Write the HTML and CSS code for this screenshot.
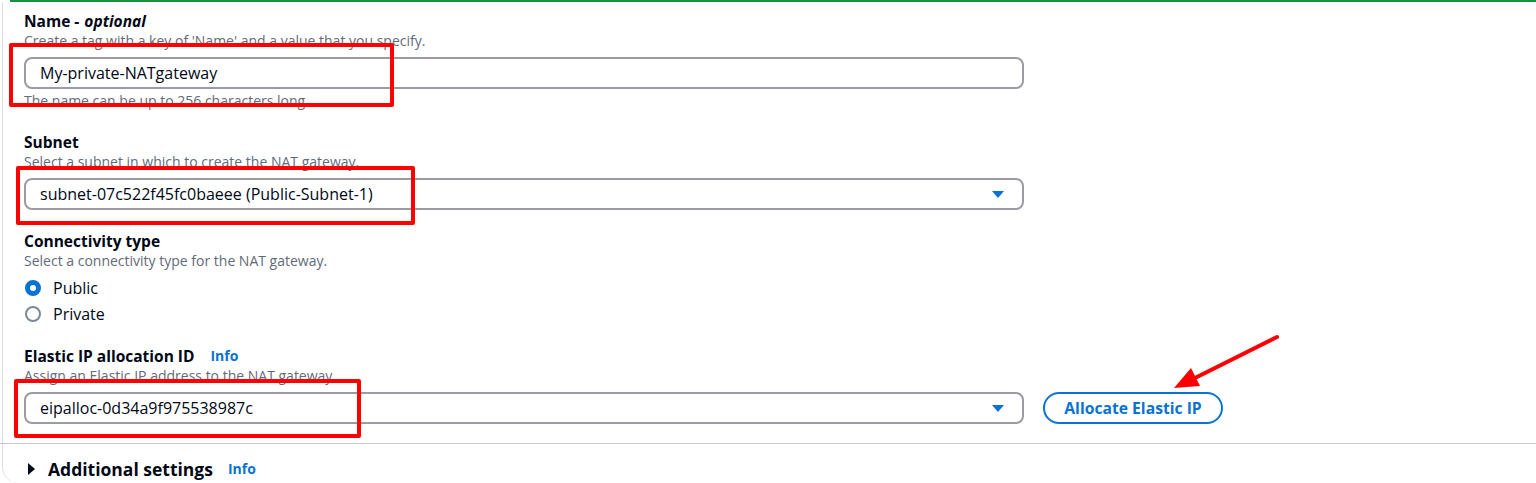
FILE: index.html
```html
<!DOCTYPE html>
<html lang="en">
<head>
<meta charset="utf-8">
<title>Create NAT gateway</title>
<link rel="stylesheet" href="styles.css">
</head>
<body>
<div class="page">
  <div class="topbar"></div>
  <div class="panel">
    <div class="fields">
      <div class="field">
        <div class="label">Name - <i>optional</i></div>
        <div class="desc">Create a tag with a key of 'Name' and a value that you specify.</div>
        <div class="control"><div class="input">My-private-NATgateway</div></div>
        <div class="hint">The name can be up to 256 characters long.</div>
      </div>
      <div class="field">
        <div class="label">Subnet</div>
        <div class="desc">Select a subnet in which to create the NAT gateway.</div>
        <div class="control">
          <div class="input select">
            <span>subnet-07c522f45fc0baeee (Public-Subnet-1)</span>
            <svg class="caret" viewBox="0 0 16 16" width="16" height="16"><path d="M2 5h12l-6 7z"/></svg>
          </div>
        </div>
      </div>
      <div class="field">
        <div class="label">Connectivity type</div>
        <div class="desc">Select a connectivity type for the NAT gateway.</div>
        <div class="radios">
          <div class="radio"><span class="dot checked"></span><span>Public</span></div>
          <div class="radio"><span class="dot"></span><span>Private</span></div>
        </div>
      </div>
      <div class="field tight">
        <div class="label">Elastic IP allocation ID <a class="info">Info</a></div>
        <div class="desc">Assign an Elastic IP address to the NAT gateway.</div>
        <div class="control row">
          <div class="input select">
            <span>eipalloc-0d34a9f975538987c</span>
            <svg class="caret" viewBox="0 0 16 16" width="16" height="16"><path d="M2 5h12l-6 7z"/></svg>
          </div>
          <button class="btn">Allocate Elastic IP</button>
        </div>
      </div>
    </div>
    <div class="expander">
      <svg class="tri" viewBox="0 0 16 16" width="16" height="16"><path d="M4 2v12l7-6z"/></svg>
      <span class="exp-title">Additional settings</span>
      <a class="info">Info</a>
    </div>
  </div>

  <div class="mark mark1"></div>
  <div class="mark mark2"></div>
  <div class="mark mark3"></div>
  <svg class="arrow" viewBox="0 0 1536 483" width="1536" height="483">
    <line x1="1277" y1="337" x2="1193" y2="379" stroke="#ff0000" stroke-width="4" stroke-linecap="round"/>
    <polygon points="1174,388 1191,368 1200,386" fill="#ff0000"/>
  </svg>
</div>
</body>
</html>
```
FILE: styles.css
```css
* { box-sizing: border-box; }
html, body { margin: 0; padding: 0; background: #ffffff; }
body {
  font-family: "Open Sans", "Noto Sans", "Liberation Sans", sans-serif;
  color: #000716;
  width: 1536px;
  height: 483px;
  overflow: hidden;
}
.page { position: relative; width: 1536px; height: 483px; }

.topbar {
  height: 2px;
  margin-left: 10px;
  background: #1a8f3f;
  box-shadow: 0 2px 8px rgba(0, 7, 22, 0.12);
  position: relative;
}

.panel {
  margin-left: 2px;
  border-left: 1px solid #dcdde0;
  border-bottom-left-radius: 16px;
  height: 481px;
}

.fields {
  padding: 8px 0 19px 21px;
  display: flex;
  flex-direction: column;
}
.field + .field { margin-top: 20px; }
.field.tight { margin-top: 18px; }

.label {
  font-size: 15.5px;
  font-weight: 700;
  line-height: 22px;
  display: flex;
  align-items: center;
}
.label i { font-style: italic; margin-left: 5px; }
.desc, .hint {
  font-size: 14px;
  line-height: 18px;
  color: #5f6b7a;
}
.hint { margin-top: 2px; line-height: 20px; }

.control { margin-top: 7px; }
.control.row { display: flex; align-items: center; gap: 19px; }

.input {
  width: 1000px;
  height: 32px;
  border: 2px solid #9a9ba3;
  border-radius: 8px;
  padding: 0 14px;
  font-size: 16px;
  line-height: 28px;
  display: flex;
  align-items: center;
  justify-content: space-between;
}
.caret { fill: #0972d3; margin-right: 2px; }

.radios { margin-top: 5px; display: flex; flex-direction: column; }
.radio {
  height: 26px;
  display: flex;
  align-items: center;
  gap: 12px;
  font-size: 16px;
  padding-left: 1px;
}
.dot {
  width: 16px;
  height: 16px;
  border-radius: 50%;
  border: 2px solid #7d8998;
  background: #fff;
}
.dot.checked {
  border: 5px solid #0972d3;
}

.info {
  font-size: 14px;
  font-weight: 700;
  color: #0972d3;
  margin-left: 16px;
  cursor: pointer;
}

.btn {
  height: 32px;
  width: 180px;
  border: 2px solid #0972d3;
  border-radius: 20px;
  background: #fff;
  color: #0972d3;
  font-family: inherit;
  font-size: 15.7px;
  font-weight: 700;
  padding: 0 12px;
}

.expander {
  border-top: 1px solid #c6c6cd;
  margin-left: -3px;
  padding: 10px 0 0 24px;
  display: flex;
  align-items: center;
  height: 40px;
}
.tri { fill: #000716; }
.exp-title {
  font-size: 17.5px;
  font-weight: 700;
  line-height: 24px;
  margin-left: 8px;
}
.expander .info { margin-left: 15px; }

.mark {
  position: absolute;
  border: 4.5px solid #ff0000;
  border-radius: 2px;
}
.mark1 { left: 9px; top: 43px; width: 385px; height: 64px; }
.mark2 { left: 16px; top: 166px; width: 399px; height: 59px; }
.mark3 { left: 14px; top: 379px; width: 347px; height: 59px; }

.arrow { position: absolute; left: 0; top: 0; pointer-events: none; }
```
